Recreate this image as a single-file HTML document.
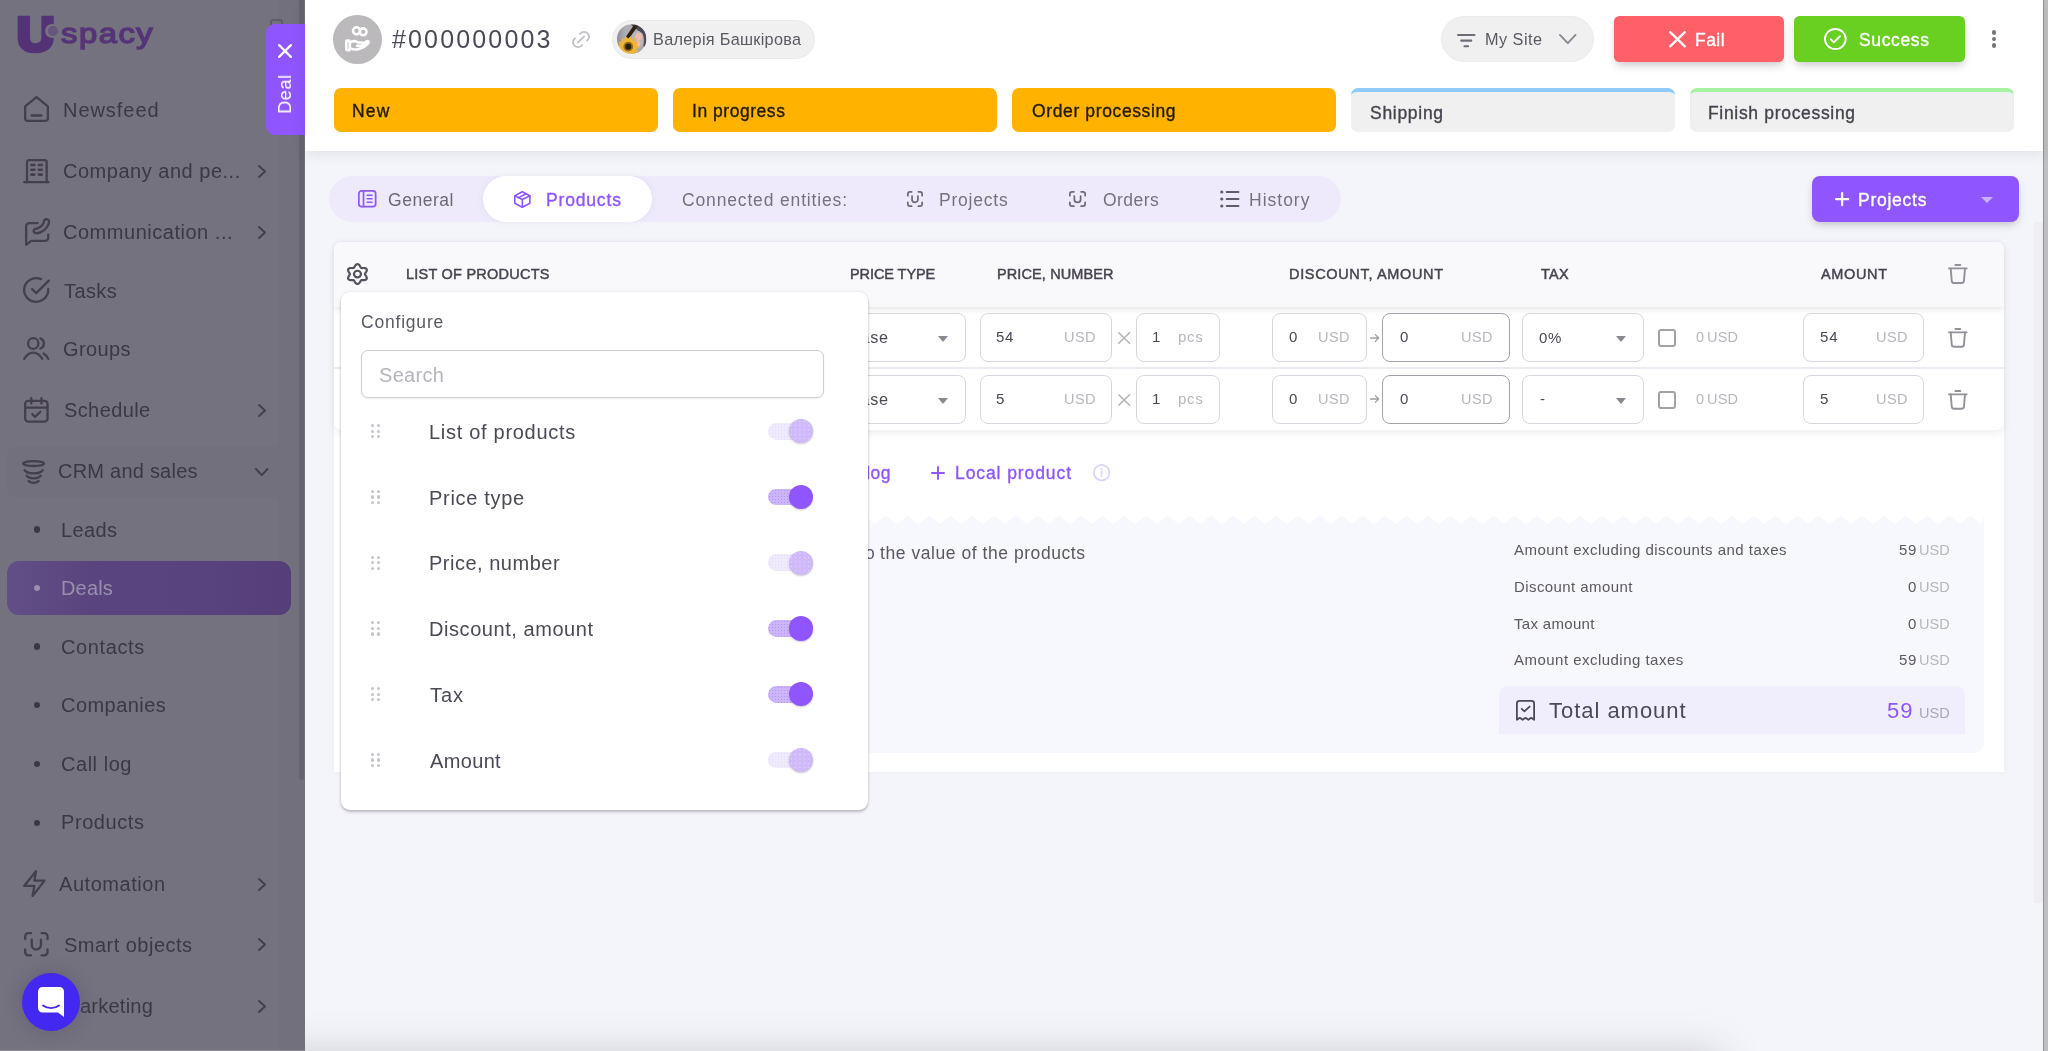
<!DOCTYPE html>
<html lang="en"><head><meta charset="utf-8"><title>Deal #000000003 - Products</title>
<style>
html,body{margin:0;padding:0;background:#f4f5fa;}
body{width:2048px;height:1051px;overflow:hidden;font-family:"Liberation Sans","DejaVu Sans",sans-serif;}
#root{position:relative;width:2048px;height:1051px;overflow:hidden;background:#f4f5fa;}
.b{position:absolute;box-sizing:border-box;}
.t{position:absolute;line-height:1;white-space:nowrap;will-change:transform;}
.ic{position:absolute;overflow:visible;}
.inp{position:absolute;box-sizing:border-box;border:1px solid #d9d7dd;border-radius:8px;background:#fff;}
.inp.dk{border-color:#a5a2ab;}
.cb{position:absolute;box-sizing:border-box;border:2px solid #a3a1a8;border-radius:3px;background:#fff;}
.car{position:absolute;width:0;height:0;border-left:5.500px solid transparent;border-right:5.500px solid transparent;border-top:6px solid #8b8891;}
.dot{position:absolute;border-radius:50%;}
</style></head><body><div id="root">
<div class="b" style="left:0.00px;top:0.00px;width:304.50px;height:1051.00px;background:#74727e;"></div>
<div class="b" style="left:278.00px;top:0.00px;width:26.50px;height:1051.00px;background:#72707c;"></div>
<div class="b" style="left:299.30px;top:0.00px;width:5.20px;height:780.00px;background:#666370;border-radius:0 0 3px 3px;"></div>
<div class="b" style="left:0.00px;top:1050.00px;width:304.50px;height:1.00px;background:#8d8b95;"></div>
<div class="b" style="left:7.00px;top:445.70px;width:283.50px;height:52.30px;background:#72707c;border-radius:11px;"></div>
<div class="b" style="left:7.00px;top:561.00px;width:283.50px;height:53.70px;background:linear-gradient(90deg,#624f86 0%,#5a447f 30%,#59437e 70%,#553e7a 100%);border-radius:12px;"></div>
<span class="t" id="t0" style="top:10.00px;font-size:49px;color:#543276;font-weight:700;left:17.40px;-webkit-text-stroke:4.600px #543276;transform:scaleX(1.060);transform-origin:0 50%;">U</span>
<div class="dot" style="left:45.200px;top:23.700px;width:14.600px;height:14.600px;background:#74727e;"></div>
<div class="dot" style="left:47.500px;top:26px;width:10px;height:10px;background:#66557d;"></div>
<span class="t" id="t1" style="top:20.00px;font-size:27.5px;color:#563478;-webkit-text-stroke:1.4px currentColor;left:61.20px;letter-spacing:1.300px;transform:scaleX(1.190);transform-origin:0 50%;">spacy</span>
<div class="b" style="left:270.00px;top:19.00px;width:12.50px;height:8.00px;border:2px solid #5f5c69;border-radius:3px;"></div>
<svg class="ic" style="left:24.00px;top:96.00px;width:25.00px;height:26.00px" viewBox="3.189 2.336 17.621 19.527" fill="none" stroke="#443f4c" stroke-width="2.3" stroke-linecap="round" stroke-linejoin="round" preserveAspectRatio="none" ><g vector-effect="non-scaling-stroke"><path d="M4 10.2 12 3.2l8 7V19a2 2 0 0 1-2 2H6a2 2 0 0 1-2-2z" vector-effect="non-scaling-stroke"/><path d="M8.5 17h7" vector-effect="non-scaling-stroke"/></g></svg>
<span class="t" id="t2" style="top:100.00px;font-size:20px;color:#3c3746;letter-spacing:0.955px;left:63.00px;">Newsfeed</span>
<svg class="ic" style="left:23.10px;top:158.70px;width:26.70px;height:24.30px" viewBox="-0.164 0.855 27.028 24.190" fill="none" stroke="#443f4c" stroke-width="2.3" stroke-linecap="round" stroke-linejoin="round" preserveAspectRatio="none" ><g vector-effect="non-scaling-stroke"><path d="M1 23.900h24.700" vector-effect="non-scaling-stroke"/><path d="M3.900 23.900V4a2 2 0 0 1 2-2h15.900a2 2 0 0 1 2 2v19.900" vector-effect="non-scaling-stroke"/><path d="M8.300 6.800h3M15.900 6.800h3M8.300 11.600h3M15.900 11.600h3M8.300 16.400h3M15.900 16.400h3" stroke-width="2.64" vector-effect="non-scaling-stroke"/></g></svg>
<span class="t" id="t3" style="top:161.00px;font-size:20px;color:#3c3746;letter-spacing:0.516px;left:63.00px;">Company and pe...</span>
<svg class="ic" style="left:257.50px;top:165.00px;width:8.00px;height:13.00px" viewBox="7.917 4.318 8.667 15.364" fill="none" stroke="#443f4c" stroke-width="2" stroke-linecap="round" stroke-linejoin="round" preserveAspectRatio="none" ><g vector-effect="non-scaling-stroke"><path d="m9 5.5 6.5 6.500-6.5 6.500" vector-effect="non-scaling-stroke"/></g></svg>
<svg class="ic" style="left:24.60px;top:217.50px;width:25.20px;height:28.00px" viewBox="-0.160 -0.037 25.420 27.673" fill="none" stroke="#443f4c" stroke-width="2.3" stroke-linecap="round" stroke-linejoin="round" preserveAspectRatio="none" ><g vector-effect="non-scaling-stroke"><path d="M12.500 5H4a3 3 0 0 0-3 3v18.500l5-4h14.300a3 3 0 0 0 3-3v-3" vector-effect="non-scaling-stroke"/><path d="M8.800 11.600c-.900 1.300.300 3 1.900 3.400 5.400.600 12.600-5.200 13.400-10.900.200-1.600-1-3-2.600-3-1.500.100-2.400 1.200-2.500 2.500-.200 2.300-3.400 5.700-6.400 6.600-1.400.400-3 .100-3.800 1.400z" vector-effect="non-scaling-stroke"/></g></svg>
<span class="t" id="t4" style="top:222.00px;font-size:20px;color:#3c3746;letter-spacing:0.524px;left:63.00px;">Communication ...</span>
<svg class="ic" style="left:257.50px;top:225.50px;width:8.00px;height:13.00px" viewBox="7.917 4.318 8.667 15.364" fill="none" stroke="#443f4c" stroke-width="2" stroke-linecap="round" stroke-linejoin="round" preserveAspectRatio="none" ><g vector-effect="non-scaling-stroke"><path d="m9 5.5 6.5 6.500-6.5 6.500" vector-effect="non-scaling-stroke"/></g></svg>
<svg class="ic" style="left:23.00px;top:277.00px;width:27.00px;height:26.00px" viewBox="1.592 1.578 21.316 20.844" fill="none" stroke="#443f4c" stroke-width="2.3" stroke-linecap="round" stroke-linejoin="round" preserveAspectRatio="none" ><g vector-effect="non-scaling-stroke"><path d="M21.5 11.1V12a9.5 9.5 0 1 1-5.6-8.7" vector-effect="non-scaling-stroke"/><path d="M22 4.5 12 14.5l-3.2-3.2" vector-effect="non-scaling-stroke"/></g></svg>
<span class="t" id="t5" style="top:281.00px;font-size:20px;color:#3c3746;letter-spacing:0.394px;left:64.00px;">Tasks</span>
<svg class="ic" style="left:23.20px;top:336.60px;width:26.40px;height:23.00px" viewBox="0.026 0.256 26.948 22.889" fill="none" stroke="#443f4c" stroke-width="2.3" stroke-linecap="round" stroke-linejoin="round" preserveAspectRatio="none" ><g vector-effect="non-scaling-stroke"><circle cx="10.500" cy="6.700" r="5.300" vector-effect="non-scaling-stroke"/><path d="M1.200 22C4 17.500 7.500 15.800 10.500 15.800S17 17.500 19.800 22" vector-effect="non-scaling-stroke"/><path d="M17.800 1.700a5.300 5.300 0 0 1 0 10" vector-effect="non-scaling-stroke"/><path d="M21 16.600c2 1 3.600 2.800 4.800 5.400" vector-effect="non-scaling-stroke"/></g></svg>
<span class="t" id="t6" style="top:339.00px;font-size:20px;color:#3c3746;letter-spacing:0.383px;left:63.00px;">Groups</span>
<svg class="ic" style="left:24.00px;top:397.00px;width:24.70px;height:25.70px" viewBox="2.296 1.261 19.407 20.977" fill="none" stroke="#443f4c" stroke-width="2.3" stroke-linecap="round" stroke-linejoin="round" preserveAspectRatio="none" ><g vector-effect="non-scaling-stroke"><rect x="3.2" y="4.5" width="17.6" height="16.8" rx="2.5" vector-effect="non-scaling-stroke"/><path d="M16 2.2v4.4M8 2.2v4.4M3.2 10h17.6" vector-effect="non-scaling-stroke"/><path d="m8.8 15.3 2.2 2.2 4.2-4.2" vector-effect="non-scaling-stroke"/></g></svg>
<span class="t" id="t7" style="top:400.00px;font-size:20px;color:#3c3746;letter-spacing:0.389px;left:64.00px;">Schedule</span>
<svg class="ic" style="left:257.50px;top:403.50px;width:8.00px;height:13.00px" viewBox="7.917 4.318 8.667 15.364" fill="none" stroke="#443f4c" stroke-width="2" stroke-linecap="round" stroke-linejoin="round" preserveAspectRatio="none" ><g vector-effect="non-scaling-stroke"><path d="m9 5.5 6.5 6.500-6.5 6.500" vector-effect="non-scaling-stroke"/></g></svg>
<svg class="ic" style="left:22.40px;top:459.60px;width:23.30px;height:24.00px" viewBox="-0.111 -0.134 23.522 23.668" fill="none" stroke="#443f4c" stroke-width="2.3" stroke-linecap="round" stroke-linejoin="round" preserveAspectRatio="none" ><g vector-effect="non-scaling-stroke"><ellipse cx="11.650" cy="3.400" rx="10.600" ry="2.400" vector-effect="non-scaling-stroke"/><path d="M2.500 10c3 4.200 15.300 4.200 18.300 0" vector-effect="non-scaling-stroke"/><path d="M4.600 15.400c2.600 3.400 11.500 3.400 14.100 0" vector-effect="non-scaling-stroke"/><path d="M6.600 20.700c2.400 2.200 7.700 2.200 10.100 0" vector-effect="non-scaling-stroke"/></g></svg>
<span class="t" id="t8" style="top:461.00px;font-size:20px;color:#3c3746;letter-spacing:0.232px;left:58.00px;">CRM and sales</span>
<svg class="ic" style="left:23.00px;top:870.00px;width:22.70px;height:27.00px" viewBox="1.985 1.592 20.029 21.316" fill="none" stroke="#443f4c" stroke-width="2.3" stroke-linecap="round" stroke-linejoin="round" preserveAspectRatio="none" ><g vector-effect="non-scaling-stroke"><path d="M13.5 2.5 3 14.2h9L10.5 22 21 10h-9z" vector-effect="non-scaling-stroke"/></g></svg>
<span class="t" id="t9" style="top:874.00px;font-size:20px;color:#3c3746;letter-spacing:0.550px;left:59.00px;">Automation</span>
<svg class="ic" style="left:257.50px;top:877.50px;width:8.00px;height:13.00px" viewBox="7.917 4.318 8.667 15.364" fill="none" stroke="#443f4c" stroke-width="2" stroke-linecap="round" stroke-linejoin="round" preserveAspectRatio="none" ><g vector-effect="non-scaling-stroke"><path d="m9 5.5 6.5 6.500-6.5 6.500" vector-effect="non-scaling-stroke"/></g></svg>
<svg class="ic" style="left:24.00px;top:932.00px;width:24.70px;height:24.50px" viewBox="2.627 2.619 18.746 18.761" fill="none" stroke="#443f4c" stroke-width="2.3" stroke-linecap="round" stroke-linejoin="round" preserveAspectRatio="none" ><g vector-effect="non-scaling-stroke"><path d="M3.5 8V6A2.5 2.5 0 0 1 6 3.5h2M3.5 16v2A2.5 2.5 0 0 0 6 20.500h2M16 3.5h2A2.5 2.5 0 0 1 20.500 6v2M16 20.500h2a2.5 2.5 0 0 0 2.5-2.5v-2" vector-effect="non-scaling-stroke"/><path d="M8.5 8.5v4a3.5 3.5 0 0 0 7 0v-4" vector-effect="non-scaling-stroke"/></g></svg>
<span class="t" id="t10" style="top:935.00px;font-size:20px;color:#3c3746;letter-spacing:0.478px;left:64.00px;">Smart objects</span>
<svg class="ic" style="left:257.50px;top:938.20px;width:8.00px;height:13.00px" viewBox="7.917 4.318 8.667 15.364" fill="none" stroke="#443f4c" stroke-width="2" stroke-linecap="round" stroke-linejoin="round" preserveAspectRatio="none" ><g vector-effect="non-scaling-stroke"><path d="m9 5.5 6.5 6.500-6.5 6.500" vector-effect="non-scaling-stroke"/></g></svg>
<span class="t" id="t11" style="top:996.00px;font-size:20px;color:#3c3746;letter-spacing:0.251px;left:63.00px;">Marketing</span>
<svg class="ic" style="left:257.50px;top:999.50px;width:8.00px;height:13.00px" viewBox="7.917 4.318 8.667 15.364" fill="none" stroke="#443f4c" stroke-width="2" stroke-linecap="round" stroke-linejoin="round" preserveAspectRatio="none" ><g vector-effect="non-scaling-stroke"><path d="m9 5.5 6.5 6.500-6.5 6.500" vector-effect="non-scaling-stroke"/></g></svg>
<svg class="ic" style="left:254.50px;top:467.50px;width:13.50px;height:8.20px" viewBox="3.783 7.371 16.435 9.258" fill="none" stroke="#443f4c" stroke-width="2" stroke-linecap="round" stroke-linejoin="round" preserveAspectRatio="none" ><g vector-effect="non-scaling-stroke"><path d="m5 8.500 7 7 7-7" vector-effect="non-scaling-stroke"/></g></svg>
<div class="dot" style="left:33.700px;top:526.30px;width:6.400px;height:6.400px;background:#3c3746;"></div>
<span class="t" id="t12" style="top:520.00px;font-size:20px;color:#3c3746;letter-spacing:0.377px;left:60.70px;">Leads</span>
<div class="dot" style="left:33.700px;top:584.80px;width:6.400px;height:6.400px;background:#988fac;"></div>
<span class="t" id="t13" style="top:578.00px;font-size:20px;color:#988fac;letter-spacing:0.167px;left:60.70px;">Deals</span>
<div class="dot" style="left:33.700px;top:643.30px;width:6.400px;height:6.400px;background:#3c3746;"></div>
<span class="t" id="t14" style="top:637.00px;font-size:20px;color:#3c3746;letter-spacing:0.625px;left:60.70px;">Contacts</span>
<div class="dot" style="left:33.700px;top:701.80px;width:6.400px;height:6.400px;background:#3c3746;"></div>
<span class="t" id="t15" style="top:695.00px;font-size:20px;color:#3c3746;letter-spacing:0.455px;left:60.70px;">Companies</span>
<div class="dot" style="left:33.700px;top:760.80px;width:6.400px;height:6.400px;background:#3c3746;"></div>
<span class="t" id="t16" style="top:754.00px;font-size:20px;color:#3c3746;letter-spacing:0.532px;left:60.70px;">Call log</span>
<div class="dot" style="left:33.700px;top:819.50px;width:6.400px;height:6.400px;background:#3c3746;"></div>
<span class="t" id="t17" style="top:812.00px;font-size:20px;color:#3c3746;letter-spacing:0.582px;left:60.70px;">Products</span>
<div class="b" style="left:22.00px;top:973.00px;width:58.00px;height:58.00px;background:#4228f0;border-radius:50%;box-shadow:0 0 14px 4px rgba(90,80,120,.35);"></div>
<svg class="ic" style="left:38px;top:986.500px;width:26px;height:30px" viewBox="0 0 26 30"><path d="M4.500 0h17A4.500 4.500 0 0 1 26 4.500V30l-6-4.500H4.500A4.500 4.500 0 0 1 0 21V4.500A4.500 4.500 0 0 1 4.500 0z" fill="#fff"/><path d="M5 18.500c4.500 3.400 11.500 3.400 16 0" fill="none" stroke="#4228f0" stroke-width="1.800" stroke-linecap="round"/></svg>
<div class="b" style="left:265.50px;top:24.00px;width:39.50px;height:111.00px;background:#8f55fe;border-radius:9px 0 0 9px;"></div>
<svg class="ic" style="left:278.00px;top:44.00px;width:14.00px;height:14.00px" viewBox="3.695 3.695 16.610 16.610" fill="none" stroke="#fff" stroke-width="2.2" stroke-linecap="round" stroke-linejoin="round" preserveAspectRatio="none" ><g vector-effect="non-scaling-stroke"><path d="M5 5l14 14M19 5 5 19" vector-effect="non-scaling-stroke"/></g></svg>
<span class="t" id="t18" style="top:-15.00px;font-size:18px;color:#fff;left:-1.00px;left:285px;top:94px;transform:translate(-50%,-50%) rotate(-90deg);letter-spacing:0.600px;">Deal</span>
<div class="b" style="left:304.50px;top:940.00px;width:1738.30px;height:111.00px;overflow:hidden;"><div style="position:absolute;left:-80px;top:122px;width:1490px;height:120px;box-shadow:0 0 40px 6px rgba(58,53,65,.24);"></div></div>
<div class="b" style="left:2033.50px;top:222.00px;width:9.50px;height:681.00px;background:#eeeef3;"></div>
<div class="b" style="left:2042.80px;top:0.00px;width:5.20px;height:1051.00px;background:#c0bec0;"></div>
<div class="b" style="left:2042.80px;top:0.00px;width:1.30px;height:1051.00px;background:linear-gradient(90deg,#85838d,#a3a1a8);"></div>
<div class="b" style="left:304.50px;top:0.00px;width:1738.00px;height:151.00px;background:#fff;box-shadow:0 3px 12px rgba(58,53,65,.10);"></div>
<div class="b" style="left:333.00px;top:14.60px;width:48.80px;height:49.00px;background:#bbb9bb;border-radius:50%;"></div>
<svg class="ic" style="left:344.70px;top:26.40px;width:25.20px;height:25.40px" viewBox="0.006 0.617 25.088 25.066" fill="none" stroke="#fff" stroke-width="2.6" stroke-linecap="round" stroke-linejoin="round" preserveAspectRatio="none" ><g vector-effect="non-scaling-stroke"><circle cx="11.5" cy="5.4" r="3.5" vector-effect="non-scaling-stroke"/><circle cx="18.1" cy="6.4" r="3.4" vector-effect="non-scaling-stroke"/><rect x="1.3" y="15.1" width="3.5" height="9.3" rx="0.9" vector-effect="non-scaling-stroke"/><path d="M4.8 17.2c2.4-1.7 5.9-1.9 8.200-.3h3.400a1.600 1.600 0 0 1 0 3.200h-4.300" vector-effect="non-scaling-stroke"/><path d="M4.800 22.500c3 1.300 6.600 1.700 9.200.9 3.100-1 7-3.400 9.400-6 .900-1.100-.500-2.500-1.800-1.700l-3.700 2.300" vector-effect="non-scaling-stroke"/></g></svg>
<span class="t" id="t19" style="top:27.00px;font-size:25px;color:#4c4855;letter-spacing:2.152px;left:392.00px;">#000000003</span>
<svg class="ic" style="left:572.00px;top:30.50px;width:18.00px;height:17.00px" viewBox="3.056 2.993 17.888 18.013" fill="none" stroke="#c3c1c8" stroke-width="1.9" stroke-linecap="round" stroke-linejoin="round" preserveAspectRatio="none" ><g vector-effect="non-scaling-stroke"><path d="m9 15 6-6" vector-effect="non-scaling-stroke"/><path d="m11 6 .463-.536a5 5 0 0 1 7.071 7.072L18 13" vector-effect="non-scaling-stroke"/><path d="m13 18-.397.534a5.068 5.068 0 0 1-7.127 0 4.972 4.972 0 0 1 0-7.071L6 11" vector-effect="non-scaling-stroke"/></g></svg>
<div class="b" style="left:612.00px;top:19.50px;width:203.00px;height:39.00px;background:#f0f0f1;border-radius:20px;border:1px solid #e9e9ec;"></div>
<svg class="ic" style="left:616.900px;top:24px;width:29.400px;height:30px" viewBox="0 0 30 30"><defs><clipPath id="avc"><circle cx="15" cy="15" r="15"/></clipPath><linearGradient id="avg" x1="0" y1="0" x2="1" y2="0"><stop offset="0" stop-color="#8f8d97"/><stop offset=".3" stop-color="#b1afb8"/><stop offset="1" stop-color="#a5a3ab"/></linearGradient></defs><g clip-path="url(#avc)"><rect width="30" height="30" fill="url(#avg)"/><path d="M14 0h8c5 2 8 8 8 15v8h-3c1-8-1-15-9-19z" fill="#4b4753"/><ellipse cx="21" cy="15.500" rx="6.500" ry="9" fill="#b7b5bb"/><ellipse cx="22" cy="12.500" rx="3.300" ry="4" fill="#f4b9ab"/><ellipse cx="21.500" cy="19.500" rx="2.400" ry="3.200" fill="#f4b9ab"/><path d="M17.500 0.500l3.500 1.800L11.500 15.500 8.800 13.200z" fill="#2b2114"/><polygon points="22.7,23.0 19.9,24.9 21.6,27.9 18.2,28.4 18.5,31.8 15.2,30.7 14.0,33.9 11.5,31.6 9.0,33.9 7.8,30.7 4.5,31.8 4.8,28.4 1.4,27.9 3.1,24.9 0.3,23.0 3.1,21.1 1.4,18.1 4.8,17.6 4.5,14.2 7.8,15.3 9.0,12.1 11.5,14.4 14.0,12.1 15.2,15.3 18.5,14.2 18.2,17.6 21.6,18.1 19.9,21.1" fill="#efb537"/><circle cx="11.500" cy="22.800" r="5" fill="#9c6f17"/><circle cx="11.500" cy="22.800" r="3.100" fill="#2c200d"/></g></svg>
<span class="t" id="t20" style="top:31.00px;font-size:16.25px;color:#5b5863;letter-spacing:0.291px;left:653.00px;">Валерія Башкірова</span>
<div class="b" style="left:1441.00px;top:16.00px;width:153.00px;height:46.00px;background:#f0f0f1;border-radius:23px;border:1px solid #ebebee;"></div>
<svg class="ic" style="left:1456.50px;top:34.30px;width:18.50px;height:13.30px" viewBox="1.848 5.469 20.305 13.062" fill="none" stroke="#6f6c77" stroke-width="2.1" stroke-linecap="round" stroke-linejoin="round" preserveAspectRatio="none" ><g vector-effect="non-scaling-stroke"><path d="M3 6.500h18M6.500 12h11M10 17.500h4" vector-effect="non-scaling-stroke"/></g></svg>
<span class="t" id="t21" style="top:31.00px;font-size:16.25px;color:#5b5863;letter-spacing:0.477px;left:1484.70px;">My Site</span>
<svg class="ic" style="left:1558.50px;top:34.00px;width:17.50px;height:10.00px" viewBox="4.147 7.679 15.705 8.642" fill="none" stroke="#8a8791" stroke-width="1.9" stroke-linecap="round" stroke-linejoin="round" preserveAspectRatio="none" ><g vector-effect="non-scaling-stroke"><path d="m5 8.500 7 7 7-7" vector-effect="non-scaling-stroke"/></g></svg>
<div class="b" style="left:1613.50px;top:16.00px;width:170.50px;height:46.00px;background:#ff5f66;border-radius:5.500px;box-shadow:0 5px 8px -2px rgba(58,53,65,.28);"></div>
<svg class="ic" style="left:1668.50px;top:31.00px;width:17.00px;height:16.50px" viewBox="3.849 3.809 16.301 16.383" fill="none" stroke="#fff" stroke-width="2.4" stroke-linecap="round" stroke-linejoin="round" preserveAspectRatio="none" ><g vector-effect="non-scaling-stroke"><path d="M5 5l14 14M19 5 5 19" vector-effect="non-scaling-stroke"/></g></svg>
<span class="t" id="t22" style="top:32.00px;font-size:17.5px;color:#fff;letter-spacing:0.447px;-webkit-text-stroke:0.35px currentColor;left:1694.67px;">Fail</span>
<div class="b" style="left:1794.00px;top:16.00px;width:171.00px;height:46.00px;background:#69cf20;border-radius:5.500px;box-shadow:0 5px 8px -2px rgba(58,53,65,.28);"></div>
<svg class="ic" style="left:1824.00px;top:28.00px;width:22.70px;height:22.00px" viewBox="1.087 1.055 21.827 21.891" fill="none" stroke="#fff" stroke-width="1.9" stroke-linecap="round" stroke-linejoin="round" preserveAspectRatio="none" ><g vector-effect="non-scaling-stroke"><circle cx="12" cy="12" r="10" vector-effect="non-scaling-stroke"/><path d="m7.500 12.300 3 3 6-6" vector-effect="non-scaling-stroke"/></g></svg>
<span class="t" id="t23" style="top:32.00px;font-size:17.5px;color:#fff;letter-spacing:0.627px;-webkit-text-stroke:0.35px currentColor;left:1858.67px;">Success</span>
<div class="dot" style="left:1991.800px;top:30.30px;width:4.400px;height:4.400px;background:#77747e;"></div>
<div class="dot" style="left:1991.800px;top:36.80px;width:4.400px;height:4.400px;background:#77747e;"></div>
<div class="dot" style="left:1991.800px;top:43.30px;width:4.400px;height:4.400px;background:#77747e;"></div>
<div class="b" style="left:334.00px;top:88.00px;width:324.00px;height:44.00px;background:#ffb300;border-radius:7px;"></div>
<div class="b" style="left:672.50px;top:88.00px;width:324.50px;height:44.00px;background:#ffb300;border-radius:7px;"></div>
<div class="b" style="left:1012.00px;top:88.00px;width:324.00px;height:44.00px;background:#ffb300;border-radius:7px;"></div>
<div class="b" style="left:1351.00px;top:88.00px;width:324.00px;height:44.00px;background:#f0f0f1;border-radius:7px;border-top:4px solid #8ecbfa;"></div>
<div class="b" style="left:1690.00px;top:88.00px;width:324.00px;height:44.00px;background:#f0f0f1;border-radius:7px;border-top:4px solid #a6f4a2;"></div>
<span class="t" id="t24" style="top:103.00px;font-size:17.5px;color:#231a05;letter-spacing:1.140px;-webkit-text-stroke:0.35px currentColor;left:352.18px;">New</span>
<span class="t" id="t25" style="top:103.00px;font-size:17.5px;color:#231a05;letter-spacing:0.536px;-webkit-text-stroke:0.35px currentColor;left:691.67px;">In progress</span>
<span class="t" id="t26" style="top:103.00px;font-size:17.5px;color:#231a05;letter-spacing:0.624px;-webkit-text-stroke:0.35px currentColor;left:1031.67px;">Order processing</span>
<span class="t" id="t27" style="top:105.00px;font-size:17.5px;color:#45424d;letter-spacing:0.710px;-webkit-text-stroke:0.35px currentColor;left:1370.17px;">Shipping</span>
<span class="t" id="t28" style="top:105.00px;font-size:17.5px;color:#45424d;letter-spacing:0.682px;-webkit-text-stroke:0.35px currentColor;left:1708.17px;">Finish processing</span>
<div class="b" style="left:329.00px;top:176.00px;width:1012.00px;height:46.00px;background:#eeeafb;border-radius:23px;"></div>
<div class="b" style="left:483.00px;top:176.00px;width:168.50px;height:46.00px;background:#fff;border-radius:23px;box-shadow:0 0 6px rgba(120,100,180,.10);"></div>
<svg class="ic" style="left:358.00px;top:190.00px;width:18.50px;height:17.50px" viewBox="2.089 2.032 19.821 19.937" fill="none" stroke="#8f55fe" stroke-width="1.7" stroke-linecap="round" stroke-linejoin="round" preserveAspectRatio="none" ><g vector-effect="non-scaling-stroke"><rect x="3" y="3" width="18" height="18" rx="3" vector-effect="non-scaling-stroke"/><path d="M8 3v18" vector-effect="non-scaling-stroke"/><path d="M12 8h5M12 12h5M12 16h5" vector-effect="non-scaling-stroke"/></g></svg>
<span class="t" id="t29" style="top:192.00px;font-size:17.5px;color:#6c6975;letter-spacing:0.522px;left:388.00px;">General</span>
<svg class="ic" style="left:514.00px;top:190.50px;width:16.70px;height:17.00px" viewBox="2.599 1.844 18.801 20.312" fill="none" stroke="#8f55fe" stroke-width="1.6" stroke-linecap="round" stroke-linejoin="round" preserveAspectRatio="none" ><g vector-effect="non-scaling-stroke"><path d="M12 2.800 20.500 7.500v9L12 21.200 3.500 16.500v-9z" vector-effect="non-scaling-stroke"/><path d="M12 12l8.500-4.500M12 12v9.200M12 12 3.500 7.500" vector-effect="non-scaling-stroke"/><path d="M16.300 5.200 7.800 9.800" vector-effect="non-scaling-stroke"/></g></svg>
<span class="t" id="t30" style="top:192.00px;font-size:17.5px;color:#8f55fe;letter-spacing:0.834px;-webkit-text-stroke:0.35px currentColor;left:545.67px;">Products</span>
<span class="t" id="t31" style="top:192.00px;font-size:17.5px;color:#75727d;letter-spacing:0.847px;left:681.50px;">Connected entities:</span>
<svg class="ic" style="left:907.00px;top:191.00px;width:16.00px;height:16.00px" viewBox="2.490 2.490 19.021 19.021" fill="none" stroke="#6c6975" stroke-width="1.7" stroke-linecap="round" stroke-linejoin="round" preserveAspectRatio="none" ><g vector-effect="non-scaling-stroke"><path d="M3.5 8V6A2.5 2.5 0 0 1 6 3.5h2M3.5 16v2A2.5 2.5 0 0 0 6 20.500h2M16 3.5h2A2.5 2.5 0 0 1 20.500 6v2M16 20.500h2a2.5 2.5 0 0 0 2.5-2.5v-2" vector-effect="non-scaling-stroke"/><path d="M8.5 8.5v4a3.5 3.5 0 0 0 7 0v-4" vector-effect="non-scaling-stroke"/></g></svg>
<span class="t" id="t32" style="top:192.00px;font-size:17.5px;color:#75727d;letter-spacing:0.791px;left:939.00px;">Projects</span>
<svg class="ic" style="left:1069.00px;top:191.00px;width:17.00px;height:16.00px" viewBox="2.556 2.490 18.889 19.021" fill="none" stroke="#6c6975" stroke-width="1.7" stroke-linecap="round" stroke-linejoin="round" preserveAspectRatio="none" ><g vector-effect="non-scaling-stroke"><path d="M3.5 8V6A2.5 2.5 0 0 1 6 3.5h2M3.5 16v2A2.5 2.5 0 0 0 6 20.500h2M16 3.5h2A2.5 2.5 0 0 1 20.500 6v2M16 20.500h2a2.5 2.5 0 0 0 2.5-2.5v-2" vector-effect="non-scaling-stroke"/><path d="M8.5 8.5v4a3.5 3.5 0 0 0 7 0v-4" vector-effect="non-scaling-stroke"/></g></svg>
<span class="t" id="t33" style="top:192.00px;font-size:17.5px;color:#75727d;letter-spacing:0.453px;left:1103.00px;">Orders</span>
<svg class="ic" style="left:1220.00px;top:191.00px;width:19.50px;height:16.00px" viewBox="2.183 4.571 19.834 14.857" fill="none" stroke="#5f5c68" stroke-width="2" stroke-linecap="round" stroke-linejoin="round" preserveAspectRatio="none" ><g vector-effect="non-scaling-stroke"><path d="M9 5.500h12M9 12h12M9 18.500h12" vector-effect="non-scaling-stroke"/><path d="M4 5.500v.01M4 12v.01M4 18.500v.01" stroke-width="3.20" vector-effect="non-scaling-stroke"/></g></svg>
<span class="t" id="t34" style="top:192.00px;font-size:17.5px;color:#75727d;letter-spacing:1.000px;left:1249.00px;">History</span>
<div class="b" style="left:1812.00px;top:176.00px;width:207.00px;height:46.00px;background:#8f55fe;border-radius:8px;box-shadow:0 4px 8px -2px rgba(58,53,65,.30);"></div>
<svg class="ic" style="left:1834.70px;top:191.80px;width:14.30px;height:14.30px" viewBox="2.545 2.545 18.909 18.909" fill="none" stroke="#fff" stroke-width="2.2" stroke-linecap="round" stroke-linejoin="round" preserveAspectRatio="none" ><g vector-effect="non-scaling-stroke"><path d="M12 4v16M4 12h16" vector-effect="non-scaling-stroke"/></g></svg>
<span class="t" id="t35" style="top:192.00px;font-size:17.5px;color:#fff;letter-spacing:0.741px;-webkit-text-stroke:0.35px currentColor;left:1858.17px;">Projects</span>
<div class="car" style="left:1981px;top:196.500px;border-left-width:6px;border-right-width:6px;border-top:6.500px solid #cbb0ff;"></div>
<div class="b" style="left:334.00px;top:241.70px;width:1670.00px;height:530.60px;background:#fff;border-radius:7px 7px 0 0;box-shadow:0 0 6px rgba(58,53,65,.05);"></div>
<div class="b" style="left:334.00px;top:306.00px;width:1670.00px;height:123.50px;background:#fff;border-radius:0 0 8px 8px;box-shadow:0 3px 9px rgba(58,53,65,.09);"></div>
<div class="b" style="left:334.00px;top:242.00px;width:1670.00px;height:64.50px;background:#f9f9fc;border-radius:7px 7px 0 0;box-shadow:0 2px 6px rgba(58,53,65,.13);"></div>
<svg class="ic" style="left:347.00px;top:262.90px;width:20.90px;height:22.10px" viewBox="0.631 -0.050 19.738 22.100" fill="none" stroke="#55525d" stroke-width="2.2" stroke-linecap="round" stroke-linejoin="round" preserveAspectRatio="none" ><g vector-effect="non-scaling-stroke"><path d="M10.50 1.05 11.14 1.18 11.75 1.54 12.27 2.09 12.71 2.74 13.08 3.41 13.39 4.02 13.71 4.49 14.07 4.81 14.53 4.97 15.10 5.00 15.78 4.97 16.55 4.95 17.33 5.01 18.07 5.19 18.68 5.53 19.12 6.02 19.33 6.65 19.31 7.35 19.10 8.08 18.76 8.79 18.36 9.44 18.00 10.01 17.74 10.53 17.65 11.00 17.74 11.47 18.00 11.99 18.36 12.56 18.76 13.21 19.10 13.92 19.31 14.65 19.33 15.35 19.12 15.97 18.68 16.47 18.07 16.81 17.33 16.99 16.55 17.05 15.78 17.03 15.10 17.00 14.53 17.03 14.07 17.19 13.71 17.51 13.39 17.98 13.08 18.59 12.71 19.26 12.27 19.91 11.75 20.46 11.14 20.82 10.50 20.95 9.86 20.82 9.25 20.46 8.73 19.91 8.29 19.26 7.92 18.59 7.61 17.98 7.29 17.51 6.93 17.19 6.47 17.03 5.90 17.00 5.22 17.03 4.45 17.05 3.67 16.99 2.93 16.81 2.32 16.47 1.88 15.98 1.67 15.35 1.69 14.65 1.90 13.92 2.24 13.21 2.64 12.56 3.00 11.99 3.26 11.47 3.35 11.00 3.26 10.53 3.00 10.01 2.64 9.44 2.24 8.79 1.90 8.08 1.69 7.35 1.67 6.65 1.88 6.02 2.32 5.53 2.93 5.19 3.67 5.01 4.45 4.95 5.22 4.97 5.90 5.00 6.47 4.97 6.92 4.81 7.29 4.49 7.61 4.02 7.92 3.41 8.29 2.74 8.73 2.09 9.25 1.54 9.86 1.18z" vector-effect="non-scaling-stroke"/><circle cx="10.5" cy="11.0" r="3.300" vector-effect="non-scaling-stroke"/></g></svg>
<span class="t" id="t36" style="top:267.00px;font-size:14.5px;color:#47434f;letter-spacing:0.236px;-webkit-text-stroke:0.45px currentColor;left:406.23px;">LIST OF PRODUCTS</span>
<span class="t" id="t37" style="top:267.00px;font-size:14.5px;color:#47434f;letter-spacing:-0.077px;-webkit-text-stroke:0.45px currentColor;left:849.93px;">PRICE TYPE</span>
<span class="t" id="t38" style="top:267.00px;font-size:14.5px;color:#47434f;letter-spacing:0.110px;-webkit-text-stroke:0.45px currentColor;left:996.73px;">PRICE, NUMBER</span>
<span class="t" id="t39" style="top:267.00px;font-size:14.5px;color:#47434f;letter-spacing:0.660px;-webkit-text-stroke:0.45px currentColor;left:1289.22px;">DISCOUNT, AMOUNT</span>
<span class="t" id="t40" style="top:267.00px;font-size:14.5px;color:#47434f;letter-spacing:0.299px;-webkit-text-stroke:0.45px currentColor;left:1540.72px;">TAX</span>
<span class="t" id="t41" style="top:267.00px;font-size:14.5px;color:#47434f;letter-spacing:0.656px;-webkit-text-stroke:0.45px currentColor;left:1821.22px;">AMOUNT</span>
<svg class="ic" style="left:1948.00px;top:264.00px;width:19.70px;height:20.00px" viewBox="2.039 1.161 19.921 21.878" fill="none" stroke="#93909a" stroke-width="1.9" stroke-linecap="round" stroke-linejoin="round" preserveAspectRatio="none" ><g vector-effect="non-scaling-stroke"><path d="M9.500 2.200h5" vector-effect="non-scaling-stroke"/><path d="M3 6h18" vector-effect="non-scaling-stroke"/><path d="M4.800 6.200 5.800 19.600A2.600 2.600 0 0 0 8.400 22h7.200a2.600 2.600 0 0 0 2.600-2.400L19.200 6.200" vector-effect="non-scaling-stroke"/></g></svg>
<div class="b" style="left:334.00px;top:367.20px;width:1670.00px;height:1.60px;background:#ecebf1;"></div>
<div class="inp" style="left:838.00px;top:313.10px;width:128.00px;height:48.80px;"></div>
<span class="t" id="t42" style="top:329.00px;font-size:16.25px;color:#4c4855;letter-spacing:0.666px;left:849.20px;">Base</span>
<div class="car" style="left:938px;top:335.80px;"></div>
<div class="inp" style="left:979.50px;top:313.10px;width:132.50px;height:48.80px;"></div>
<span class="t" id="t43" style="top:329.00px;font-size:15px;color:#4c4855;letter-spacing:0.658px;left:996.00px;">54</span>
<span class="t" id="t44" style="top:330.00px;font-size:14.5px;color:#b8b6bd;letter-spacing:0.429px;left:1063.90px;">USD</span>
<svg class="ic" style="left:1117.70px;top:332.00px;width:12.30px;height:12.00px" viewBox="4.028 4.000 15.944 16.000" fill="none" stroke="#b3b1b8" stroke-width="1.5" stroke-linecap="round" stroke-linejoin="round" preserveAspectRatio="none" ><g vector-effect="non-scaling-stroke"><path d="M5 5l14 14M19 5 5 19" vector-effect="non-scaling-stroke"/></g></svg>
<div class="inp" style="left:1135.70px;top:313.10px;width:84.30px;height:48.80px;"></div>
<span class="t" id="t45" style="top:329.00px;font-size:15px;color:#4c4855;left:1151.50px;">1</span>
<span class="t" id="t46" style="top:329.00px;font-size:15px;color:#b8b6bd;letter-spacing:0.729px;left:1177.70px;">pcs</span>
<div class="inp" style="left:1272.00px;top:313.10px;width:94.50px;height:48.80px;"></div>
<span class="t" id="t47" style="top:329.00px;font-size:15px;color:#4c4855;left:1289.00px;">0</span>
<span class="t" id="t48" style="top:330.00px;font-size:14.5px;color:#b8b6bd;letter-spacing:0.429px;left:1318.00px;">USD</span>
<svg class="ic" style="left:1369.70px;top:333.50px;width:9.30px;height:8.00px" viewBox="2.700 4.239 18.600 15.522" fill="none" stroke="#9f9da5" stroke-width="1.3" stroke-linecap="round" stroke-linejoin="round" preserveAspectRatio="none" ><g vector-effect="non-scaling-stroke"><path d="M4 12h16M13.500 5.500 20 12l-6.500 6.500" vector-effect="non-scaling-stroke"/></g></svg>
<div class="inp dk" style="left:1382.00px;top:313.10px;width:127.70px;height:48.80px;"></div>
<span class="t" id="t49" style="top:329.00px;font-size:15px;color:#4c4855;left:1399.70px;">0</span>
<span class="t" id="t50" style="top:330.00px;font-size:14.5px;color:#b8b6bd;letter-spacing:0.429px;left:1460.50px;">USD</span>
<div class="inp" style="left:1522.00px;top:313.10px;width:121.50px;height:48.80px;"></div>
<span class="t" id="t51" style="top:330.00px;font-size:15px;color:#4c4855;letter-spacing:0.558px;left:1539.40px;">0%</span>
<div class="car" style="left:1615.500px;top:335.80px;"></div>
<div class="cb" style="left:1658px;top:329.00px;width:18px;height:18px;"></div>
<span class="t" id="t52" style="top:330.00px;font-size:14.5px;color:#b8b6bd;left:1696.00px;">0</span>
<span class="t" id="t53" style="top:330.00px;font-size:14.5px;color:#b8b6bd;letter-spacing:0.179px;left:1706.50px;">USD</span>
<div class="inp" style="left:1803.00px;top:313.10px;width:121.00px;height:48.80px;"></div>
<span class="t" id="t54" style="top:329.00px;font-size:15px;color:#4c4855;letter-spacing:0.958px;left:1819.70px;">54</span>
<span class="t" id="t55" style="top:330.00px;font-size:14.5px;color:#b8b6bd;letter-spacing:0.429px;left:1875.50px;">USD</span>
<svg class="ic" style="left:1948.00px;top:328.00px;width:19.70px;height:19.70px" viewBox="2.039 1.143 19.921 21.913" fill="none" stroke="#93909a" stroke-width="1.9" stroke-linecap="round" stroke-linejoin="round" preserveAspectRatio="none" ><g vector-effect="non-scaling-stroke"><path d="M9.500 2.200h5" vector-effect="non-scaling-stroke"/><path d="M3 6h18" vector-effect="non-scaling-stroke"/><path d="M4.800 6.200 5.800 19.600A2.600 2.600 0 0 0 8.400 22h7.200a2.600 2.600 0 0 0 2.600-2.400L19.200 6.200" vector-effect="non-scaling-stroke"/></g></svg>
<div class="inp" style="left:838.00px;top:374.80px;width:128.00px;height:48.80px;"></div>
<span class="t" id="t56" style="top:391.00px;font-size:16.25px;color:#4c4855;letter-spacing:0.666px;left:849.20px;">Base</span>
<div class="car" style="left:938px;top:397.50px;"></div>
<div class="inp" style="left:979.50px;top:374.80px;width:132.50px;height:48.80px;"></div>
<span class="t" id="t57" style="top:391.00px;font-size:15px;color:#4c4855;left:996.00px;">5</span>
<span class="t" id="t58" style="top:392.00px;font-size:14.5px;color:#b8b6bd;letter-spacing:0.429px;left:1063.90px;">USD</span>
<svg class="ic" style="left:1117.70px;top:393.70px;width:12.30px;height:12.00px" viewBox="4.028 4.000 15.944 16.000" fill="none" stroke="#b3b1b8" stroke-width="1.5" stroke-linecap="round" stroke-linejoin="round" preserveAspectRatio="none" ><g vector-effect="non-scaling-stroke"><path d="M5 5l14 14M19 5 5 19" vector-effect="non-scaling-stroke"/></g></svg>
<div class="inp" style="left:1135.70px;top:374.80px;width:84.30px;height:48.80px;"></div>
<span class="t" id="t59" style="top:391.00px;font-size:15px;color:#4c4855;left:1151.50px;">1</span>
<span class="t" id="t60" style="top:391.00px;font-size:15px;color:#b8b6bd;letter-spacing:0.729px;left:1177.70px;">pcs</span>
<div class="inp" style="left:1272.00px;top:374.80px;width:94.50px;height:48.80px;"></div>
<span class="t" id="t61" style="top:391.00px;font-size:15px;color:#4c4855;left:1289.00px;">0</span>
<span class="t" id="t62" style="top:392.00px;font-size:14.5px;color:#b8b6bd;letter-spacing:0.429px;left:1318.00px;">USD</span>
<svg class="ic" style="left:1369.70px;top:395.20px;width:9.30px;height:8.00px" viewBox="2.700 4.239 18.600 15.522" fill="none" stroke="#9f9da5" stroke-width="1.3" stroke-linecap="round" stroke-linejoin="round" preserveAspectRatio="none" ><g vector-effect="non-scaling-stroke"><path d="M4 12h16M13.500 5.500 20 12l-6.500 6.500" vector-effect="non-scaling-stroke"/></g></svg>
<div class="inp dk" style="left:1382.00px;top:374.80px;width:127.70px;height:48.80px;"></div>
<span class="t" id="t63" style="top:391.00px;font-size:15px;color:#4c4855;left:1399.70px;">0</span>
<span class="t" id="t64" style="top:392.00px;font-size:14.5px;color:#b8b6bd;letter-spacing:0.429px;left:1460.50px;">USD</span>
<div class="inp" style="left:1522.00px;top:374.80px;width:121.50px;height:48.80px;"></div>
<span class="t" id="t65" style="top:391.00px;font-size:15px;color:#4c4855;left:1540.00px;">-</span>
<div class="car" style="left:1615.500px;top:397.50px;"></div>
<div class="cb" style="left:1658px;top:390.70px;width:18px;height:18px;"></div>
<span class="t" id="t66" style="top:392.00px;font-size:14.5px;color:#b8b6bd;left:1696.00px;">0</span>
<span class="t" id="t67" style="top:392.00px;font-size:14.5px;color:#b8b6bd;letter-spacing:0.179px;left:1706.50px;">USD</span>
<div class="inp" style="left:1803.00px;top:374.80px;width:121.00px;height:48.80px;"></div>
<span class="t" id="t68" style="top:391.00px;font-size:15px;color:#4c4855;left:1819.70px;">5</span>
<span class="t" id="t69" style="top:392.00px;font-size:14.5px;color:#b8b6bd;letter-spacing:0.429px;left:1875.50px;">USD</span>
<svg class="ic" style="left:1948.00px;top:389.70px;width:19.70px;height:19.70px" viewBox="2.039 1.143 19.921 21.913" fill="none" stroke="#93909a" stroke-width="1.9" stroke-linecap="round" stroke-linejoin="round" preserveAspectRatio="none" ><g vector-effect="non-scaling-stroke"><path d="M9.500 2.200h5" vector-effect="non-scaling-stroke"/><path d="M3 6h18" vector-effect="non-scaling-stroke"/><path d="M4.800 6.200 5.800 19.600A2.600 2.600 0 0 0 8.400 22h7.200a2.600 2.600 0 0 0 2.600-2.400L19.200 6.200" vector-effect="non-scaling-stroke"/></g></svg>
<span class="t" id="t70" style="top:465.00px;font-size:17.5px;color:#8f55fe;letter-spacing:0.344px;-webkit-text-stroke:0.35px currentColor;left:828.18px;">Catalog</span>
<svg class="ic" style="left:931.00px;top:465.50px;width:14.00px;height:14.00px" viewBox="2.744 2.744 18.512 18.512" fill="none" stroke="#8f55fe" stroke-width="1.9" stroke-linecap="round" stroke-linejoin="round" preserveAspectRatio="none" ><g vector-effect="non-scaling-stroke"><path d="M12 4v16M4 12h16" vector-effect="non-scaling-stroke"/></g></svg>
<span class="t" id="t71" style="top:465.00px;font-size:17.5px;color:#8f55fe;letter-spacing:0.912px;-webkit-text-stroke:0.35px currentColor;left:955.17px;">Local product</span>
<svg class="ic" style="left:1092.70px;top:463.70px;width:17.30px;height:17.30px" viewBox="0.356 0.356 23.288 23.288" fill="none" stroke="#dcd2fb" stroke-width="1.7" stroke-linecap="round" stroke-linejoin="round" preserveAspectRatio="none" ><g vector-effect="non-scaling-stroke"><circle cx="12" cy="12" r="10.500" vector-effect="non-scaling-stroke"/><path d="M12 11v5.500" vector-effect="non-scaling-stroke"/><path d="M12 7.500v.01" stroke-width="2.21" vector-effect="non-scaling-stroke"/></g></svg>
<div class="b" style="left:354.00px;top:524.00px;width:1630.20px;height:228.70px;background:#f7f7fe;border-radius:0 0 9px 9px;"></div>
<svg class="ic" style="left:0;top:0;width:2048px;height:1051px;pointer-events:none" viewBox="0 0 2048 1051"><path d="M354 525.500V524 L364.85 515.500 L375.70 524 L386.55 515.500 L397.40 524 L408.25 515.500 L419.10 524 L429.95 515.500 L440.80 524 L451.65 515.500 L462.50 524 L473.35 515.500 L484.20 524 L495.05 515.500 L505.90 524 L516.75 515.500 L527.60 524 L538.45 515.500 L549.30 524 L560.15 515.500 L571.00 524 L581.85 515.500 L592.70 524 L603.55 515.500 L614.40 524 L625.25 515.500 L636.10 524 L646.95 515.500 L657.80 524 L668.65 515.500 L679.50 524 L690.35 515.500 L701.20 524 L712.05 515.500 L722.90 524 L733.75 515.500 L744.60 524 L755.45 515.500 L766.30 524 L777.15 515.500 L788.00 524 L798.85 515.500 L809.70 524 L820.55 515.500 L831.40 524 L842.25 515.500 L853.10 524 L863.95 515.500 L874.80 524 L885.65 515.500 L896.50 524 L907.35 515.500 L918.20 524 L929.05 515.500 L939.90 524 L950.75 515.500 L961.60 524 L972.45 515.500 L983.30 524 L994.15 515.500 L1005.00 524 L1015.85 515.500 L1026.70 524 L1037.55 515.500 L1048.40 524 L1059.25 515.500 L1070.10 524 L1080.95 515.500 L1091.80 524 L1102.65 515.500 L1113.50 524 L1124.35 515.500 L1135.20 524 L1146.05 515.500 L1156.90 524 L1167.75 515.500 L1178.60 524 L1189.45 515.500 L1200.30 524 L1211.15 515.500 L1222.00 524 L1232.85 515.500 L1243.70 524 L1254.55 515.500 L1265.40 524 L1276.25 515.500 L1287.10 524 L1297.95 515.500 L1308.80 524 L1319.65 515.500 L1330.50 524 L1341.35 515.500 L1352.20 524 L1363.05 515.500 L1373.90 524 L1384.75 515.500 L1395.60 524 L1406.45 515.500 L1417.30 524 L1428.15 515.500 L1439.00 524 L1449.85 515.500 L1460.70 524 L1471.55 515.500 L1482.40 524 L1493.25 515.500 L1504.10 524 L1514.95 515.500 L1525.80 524 L1536.65 515.500 L1547.50 524 L1558.35 515.500 L1569.20 524 L1580.05 515.500 L1590.90 524 L1601.75 515.500 L1612.60 524 L1623.45 515.500 L1634.30 524 L1645.15 515.500 L1656.00 524 L1666.85 515.500 L1677.70 524 L1688.55 515.500 L1699.40 524 L1710.25 515.500 L1721.10 524 L1731.95 515.500 L1742.80 524 L1753.65 515.500 L1764.50 524 L1775.35 515.500 L1786.20 524 L1797.05 515.500 L1807.90 524 L1818.75 515.500 L1829.60 524 L1840.45 515.500 L1851.30 524 L1862.15 515.500 L1873.00 524 L1883.85 515.500 L1894.70 524 L1905.55 515.500 L1916.40 524 L1927.25 515.500 L1938.10 524 L1948.95 515.500 L1959.80 524 L1970.65 515.500 L1981.50 524 L1984.20 515.500 L1984.20 524 V525.500z" fill="#f7f7fe"/></svg>
<span class="t" id="t72" style="top:545.00px;font-size:17.5px;color:#5b5863;left:758.77px;">Add delivery to</span>
<span class="t" id="t73" style="top:545.00px;font-size:17.5px;color:#5b5863;letter-spacing:0.554px;left:879.50px;">the value of the products</span>
<span class="t" id="t74" style="top:542.00px;font-size:15px;color:#5b5863;letter-spacing:0.472px;left:1514.20px;">Amount excluding discounts and taxes</span>
<span class="t" id="t75" style="top:542.00px;font-size:15px;color:#5b5863;letter-spacing:0.658px;left:1898.50px;">59</span>
<span class="t" id="t76" style="top:543.00px;font-size:14.5px;color:#b8b6bd;letter-spacing:0.079px;left:1918.70px;">USD</span>
<span class="t" id="t77" style="top:579.00px;font-size:15px;color:#5b5863;letter-spacing:0.415px;left:1513.80px;">Discount amount</span>
<span class="t" id="t78" style="top:579.00px;font-size:15px;color:#5b5863;left:1907.70px;">0</span>
<span class="t" id="t79" style="top:580.00px;font-size:14.5px;color:#b8b6bd;letter-spacing:0.079px;left:1918.70px;">USD</span>
<span class="t" id="t80" style="top:616.00px;font-size:15px;color:#5b5863;letter-spacing:0.314px;left:1514.20px;">Tax amount</span>
<span class="t" id="t81" style="top:616.00px;font-size:15px;color:#5b5863;left:1907.70px;">0</span>
<span class="t" id="t82" style="top:617.00px;font-size:14.5px;color:#b8b6bd;letter-spacing:0.079px;left:1918.70px;">USD</span>
<span class="t" id="t83" style="top:652.00px;font-size:15px;color:#5b5863;letter-spacing:0.473px;left:1514.20px;">Amount excluding taxes</span>
<span class="t" id="t84" style="top:652.00px;font-size:15px;color:#5b5863;letter-spacing:0.658px;left:1898.50px;">59</span>
<span class="t" id="t85" style="top:653.00px;font-size:14.5px;color:#b8b6bd;letter-spacing:0.079px;left:1918.70px;">USD</span>
<div class="b" style="left:1499.00px;top:686.00px;width:466.20px;height:48.00px;background:#f0eefd;border-radius:9px 9px 0 0;"></div>
<svg class="ic" style="left:1516.00px;top:700.00px;width:19.00px;height:20.70px" viewBox="3.163 1.595 17.674 20.810" fill="none" stroke="#4c4855" stroke-width="1.8" stroke-linecap="round" stroke-linejoin="round" preserveAspectRatio="none" ><g vector-effect="non-scaling-stroke"><path d="M4 21.500V5a2.500 2.500 0 0 1 2.500-2.500h11A2.500 2.500 0 0 1 20 5v16.500l-2.700-2-2.650 2-2.650-2-2.650 2-2.650-2z" vector-effect="non-scaling-stroke"/><path d="m8.500 10.500 2.500 2.500 4.800-4.800" vector-effect="non-scaling-stroke"/></g></svg>
<span class="t" id="t86" style="top:700.00px;font-size:22px;color:#4c4855;letter-spacing:0.968px;left:1548.50px;">Total amount</span>
<span class="t" id="t87" style="top:700.00px;font-size:22px;color:#8f55fe;letter-spacing:1.065px;left:1886.70px;">59</span>
<span class="t" id="t88" style="top:706.00px;font-size:14.5px;color:#a9a7af;letter-spacing:0.079px;left:1918.70px;">USD</span>
<div class="b" style="left:341.00px;top:292.00px;width:527.20px;height:518.20px;background:#fff;border-radius:9px;box-shadow:0 2px 3px rgba(58,53,65,.30),0 0 3px rgba(58,53,65,.10);"></div>
<span class="t" id="t89" style="top:314.00px;font-size:17.5px;color:#5b5863;letter-spacing:0.794px;left:361.00px;">Configure</span>
<div class="b" style="left:361.00px;top:350.00px;width:462.70px;height:47.70px;background:#fff;border:1px solid #cfcdd4;border-radius:7px;box-shadow:0 1px 2px rgba(58,53,65,.08);"></div>
<span class="t" id="t90" style="top:365.00px;font-size:20px;color:#b7b5bc;letter-spacing:0.311px;left:378.70px;">Search</span>
<div class="dot" style="left:370.70px;top:424.10px;width:3.200px;height:3.200px;background:#c6c4cb;"></div>
<div class="dot" style="left:370.70px;top:429.70px;width:3.200px;height:3.200px;background:#c6c4cb;"></div>
<div class="dot" style="left:370.70px;top:435.30px;width:3.200px;height:3.200px;background:#c6c4cb;"></div>
<div class="dot" style="left:376.70px;top:424.10px;width:3.200px;height:3.200px;background:#c6c4cb;"></div>
<div class="dot" style="left:376.70px;top:429.70px;width:3.200px;height:3.200px;background:#c6c4cb;"></div>
<div class="dot" style="left:376.70px;top:435.30px;width:3.200px;height:3.200px;background:#c6c4cb;"></div>
<span class="t" id="t91" style="top:422.00px;font-size:20px;color:#4c4855;letter-spacing:0.705px;left:429.20px;">List of products</span>
<div class="b" style="left:768.00px;top:423.00px;width:44.00px;height:16.60px;background-color:#efeafc;background-image:radial-gradient(#e4dafb .55px,transparent .85px);background-size:3px 3px;border-radius:9px;"></div>
<div class="b" style="left:789.20px;top:419.20px;width:24.20px;height:24.20px;background-color:#cfb9fb;background-image:radial-gradient(#f1e9ff .45px,transparent .75px);background-size:4.400px 4.400px;border-radius:50%;box-shadow:0 1px 2px rgba(58,53,65,.28);"></div>
<div class="dot" style="left:370.70px;top:489.83px;width:3.200px;height:3.200px;background:#c6c4cb;"></div>
<div class="dot" style="left:370.70px;top:495.43px;width:3.200px;height:3.200px;background:#c6c4cb;"></div>
<div class="dot" style="left:370.70px;top:501.03px;width:3.200px;height:3.200px;background:#c6c4cb;"></div>
<div class="dot" style="left:376.70px;top:489.83px;width:3.200px;height:3.200px;background:#c6c4cb;"></div>
<div class="dot" style="left:376.70px;top:495.43px;width:3.200px;height:3.200px;background:#c6c4cb;"></div>
<div class="dot" style="left:376.70px;top:501.03px;width:3.200px;height:3.200px;background:#c6c4cb;"></div>
<span class="t" id="t92" style="top:488.00px;font-size:20px;color:#4c4855;letter-spacing:0.700px;left:429.20px;">Price type</span>
<div class="b" style="left:768.00px;top:488.73px;width:44.00px;height:16.60px;background-color:#cdb5fc;background-image:radial-gradient(#b596fb .55px,transparent .85px);background-size:3px 3px;border-radius:9px;"></div>
<div class="b" style="left:789.20px;top:484.93px;width:24.20px;height:24.20px;background-color:#8f55fe;border-radius:50%;box-shadow:0 1px 2px rgba(58,53,65,.28);"></div>
<div class="dot" style="left:370.70px;top:555.56px;width:3.200px;height:3.200px;background:#c6c4cb;"></div>
<div class="dot" style="left:370.70px;top:561.16px;width:3.200px;height:3.200px;background:#c6c4cb;"></div>
<div class="dot" style="left:370.70px;top:566.76px;width:3.200px;height:3.200px;background:#c6c4cb;"></div>
<div class="dot" style="left:376.70px;top:555.56px;width:3.200px;height:3.200px;background:#c6c4cb;"></div>
<div class="dot" style="left:376.70px;top:561.16px;width:3.200px;height:3.200px;background:#c6c4cb;"></div>
<div class="dot" style="left:376.70px;top:566.76px;width:3.200px;height:3.200px;background:#c6c4cb;"></div>
<span class="t" id="t93" style="top:553.00px;font-size:20px;color:#4c4855;letter-spacing:0.506px;left:429.20px;">Price, number</span>
<div class="b" style="left:768.00px;top:554.46px;width:44.00px;height:16.60px;background-color:#efeafc;background-image:radial-gradient(#e4dafb .55px,transparent .85px);background-size:3px 3px;border-radius:9px;"></div>
<div class="b" style="left:789.20px;top:550.66px;width:24.20px;height:24.20px;background-color:#cfb9fb;background-image:radial-gradient(#f1e9ff .45px,transparent .75px);background-size:4.400px 4.400px;border-radius:50%;box-shadow:0 1px 2px rgba(58,53,65,.28);"></div>
<div class="dot" style="left:370.70px;top:621.29px;width:3.200px;height:3.200px;background:#c6c4cb;"></div>
<div class="dot" style="left:370.70px;top:626.89px;width:3.200px;height:3.200px;background:#c6c4cb;"></div>
<div class="dot" style="left:370.70px;top:632.49px;width:3.200px;height:3.200px;background:#c6c4cb;"></div>
<div class="dot" style="left:376.70px;top:621.29px;width:3.200px;height:3.200px;background:#c6c4cb;"></div>
<div class="dot" style="left:376.70px;top:626.89px;width:3.200px;height:3.200px;background:#c6c4cb;"></div>
<div class="dot" style="left:376.70px;top:632.49px;width:3.200px;height:3.200px;background:#c6c4cb;"></div>
<span class="t" id="t94" style="top:619.00px;font-size:20px;color:#4c4855;letter-spacing:0.561px;left:429.20px;">Discount, amount</span>
<div class="b" style="left:768.00px;top:620.19px;width:44.00px;height:16.60px;background-color:#cdb5fc;background-image:radial-gradient(#b596fb .55px,transparent .85px);background-size:3px 3px;border-radius:9px;"></div>
<div class="b" style="left:789.20px;top:616.39px;width:24.20px;height:24.20px;background-color:#8f55fe;border-radius:50%;box-shadow:0 1px 2px rgba(58,53,65,.28);"></div>
<div class="dot" style="left:370.70px;top:687.02px;width:3.200px;height:3.200px;background:#c6c4cb;"></div>
<div class="dot" style="left:370.70px;top:692.62px;width:3.200px;height:3.200px;background:#c6c4cb;"></div>
<div class="dot" style="left:370.70px;top:698.22px;width:3.200px;height:3.200px;background:#c6c4cb;"></div>
<div class="dot" style="left:376.70px;top:687.02px;width:3.200px;height:3.200px;background:#c6c4cb;"></div>
<div class="dot" style="left:376.70px;top:692.62px;width:3.200px;height:3.200px;background:#c6c4cb;"></div>
<div class="dot" style="left:376.70px;top:698.22px;width:3.200px;height:3.200px;background:#c6c4cb;"></div>
<span class="t" id="t95" style="top:685.00px;font-size:20px;color:#4c4855;letter-spacing:0.888px;left:430.20px;">Tax</span>
<div class="b" style="left:768.00px;top:685.92px;width:44.00px;height:16.60px;background-color:#cdb5fc;background-image:radial-gradient(#b596fb .55px,transparent .85px);background-size:3px 3px;border-radius:9px;"></div>
<div class="b" style="left:789.20px;top:682.12px;width:24.20px;height:24.20px;background-color:#8f55fe;border-radius:50%;box-shadow:0 1px 2px rgba(58,53,65,.28);"></div>
<div class="dot" style="left:370.70px;top:752.75px;width:3.200px;height:3.200px;background:#c6c4cb;"></div>
<div class="dot" style="left:370.70px;top:758.35px;width:3.200px;height:3.200px;background:#c6c4cb;"></div>
<div class="dot" style="left:370.70px;top:763.95px;width:3.200px;height:3.200px;background:#c6c4cb;"></div>
<div class="dot" style="left:376.70px;top:752.75px;width:3.200px;height:3.200px;background:#c6c4cb;"></div>
<div class="dot" style="left:376.70px;top:758.35px;width:3.200px;height:3.200px;background:#c6c4cb;"></div>
<div class="dot" style="left:376.70px;top:763.95px;width:3.200px;height:3.200px;background:#c6c4cb;"></div>
<span class="t" id="t96" style="top:751.00px;font-size:20px;color:#4c4855;letter-spacing:0.346px;left:430.20px;">Amount</span>
<div class="b" style="left:768.00px;top:751.65px;width:44.00px;height:16.60px;background-color:#efeafc;background-image:radial-gradient(#e4dafb .55px,transparent .85px);background-size:3px 3px;border-radius:9px;"></div>
<div class="b" style="left:789.20px;top:747.85px;width:24.20px;height:24.20px;background-color:#cfb9fb;background-image:radial-gradient(#f1e9ff .45px,transparent .75px);background-size:4.400px 4.400px;border-radius:50%;box-shadow:0 1px 2px rgba(58,53,65,.28);"></div>
</div></body></html>
